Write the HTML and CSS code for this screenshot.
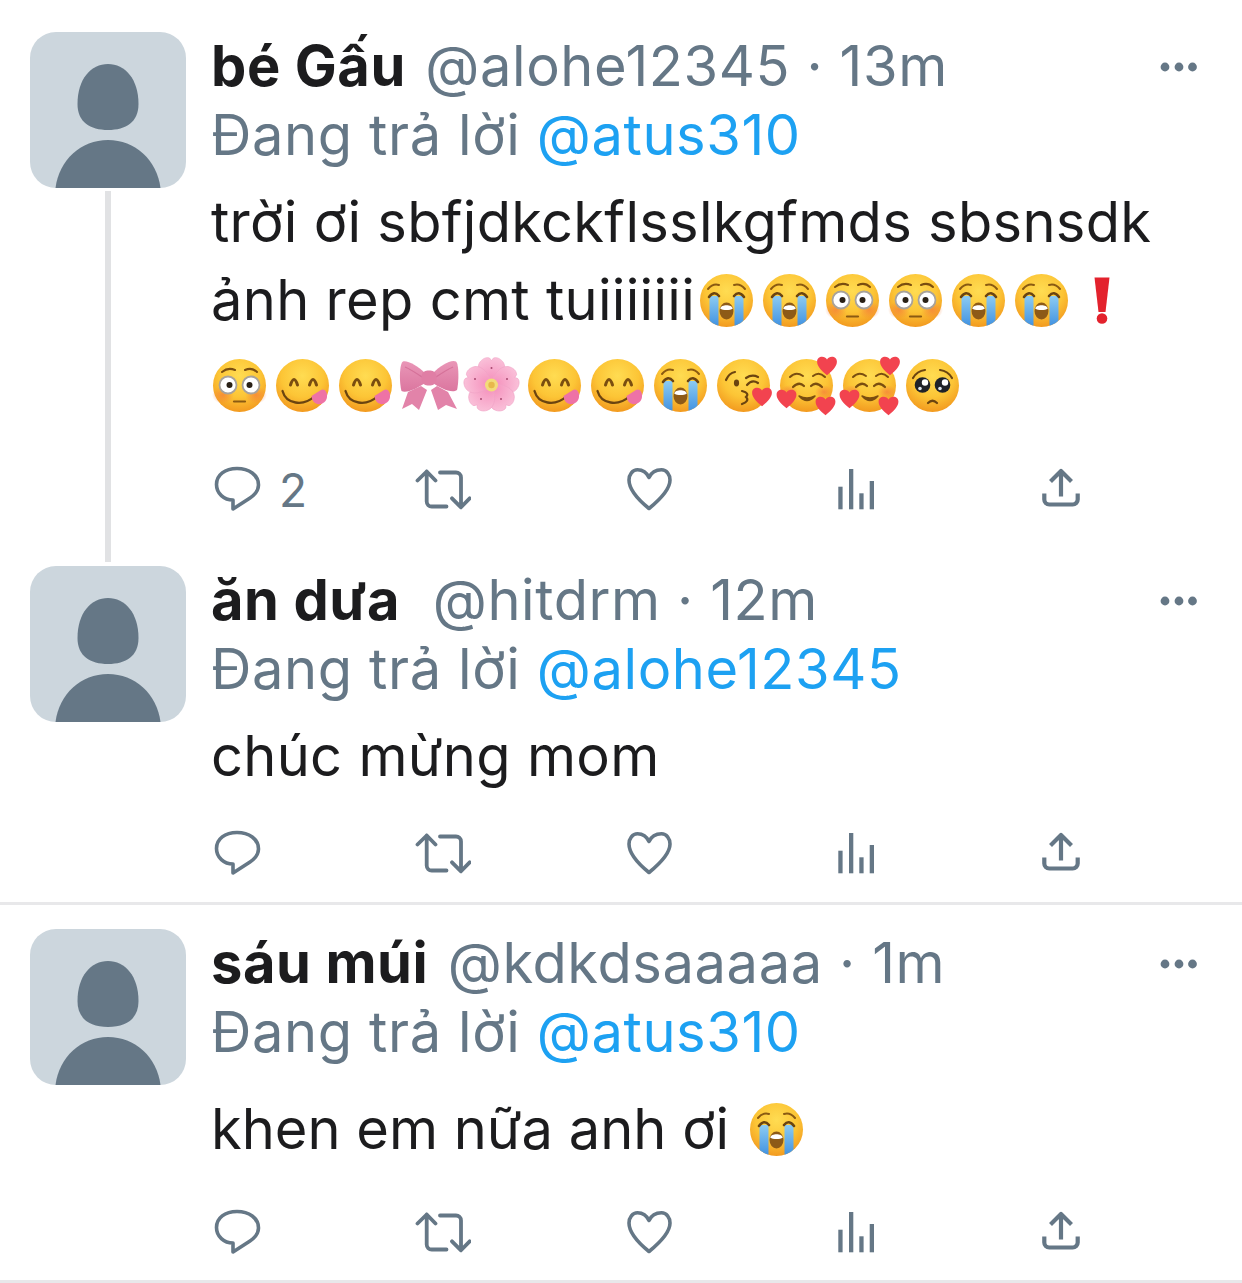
FILE: index.html
```html
<!DOCTYPE html>
<html lang="vi">
<head>
<meta charset="utf-8">
<title>Replies</title>
<link rel="stylesheet" href="styles.css">
</head>
<body>
<svg class="defs" viewBox="0 0 1 1" aria-hidden="true">
  <defs>
    <radialGradient id="face" cx="50%" cy="32%" r="72%">
      <stop offset="0" stop-color="#ffdc52"/><stop offset=".55" stop-color="#fcc536"/><stop offset="1" stop-color="#f1941c"/>
    </radialGradient>
    <radialGradient id="blush" cx="50%" cy="50%" r="50%">
      <stop offset="0" stop-color="#f5813a" stop-opacity=".75"/><stop offset="1" stop-color="#f5813a" stop-opacity="0"/>
    </radialGradient>
    <linearGradient id="tear" x1="0" y1="0" x2="0" y2="1">
      <stop offset="0" stop-color="#8ccbf2"/><stop offset="1" stop-color="#3d8fe0"/>
    </linearGradient>
    <linearGradient id="bowg" x1="0" y1="0" x2="0" y2="1">
      <stop offset="0" stop-color="#e996b7"/><stop offset="1" stop-color="#db769f"/>
    </linearGradient>
    <radialGradient id="petal" cx="50%" cy="85%" r="90%">
      <stop offset="0" stop-color="#f592bd"/><stop offset="1" stop-color="#fac2da"/>
    </radialGradient>
    <clipPath id="faceclip"><circle cx="31.5" cy="31.5" r="26.5"/></clipPath>
  </defs>

  <symbol id="ava" viewBox="0 0 156 156">
    <path d="M78 32C95 32 108.500 47 108.500 72C108.500 90 96 98 78 98C60 98 47.500 90 47.500 72C47.500 47 61 32 78 32Z"/>
    <path d="M25.500 156C29 128 51 108 78 108C105 108 127 128 130.500 156Z"/>
  </symbol>

  <symbol id="heartshape" viewBox="0 0 20 20">
    <path fill="#f2434f" d="M10 18.500C4 13.500 1 10 1 6C1 3 3 1.500 5.500 1.500C7.500 1.500 9 2.500 10 4C11 2.500 12.500 1.500 14.500 1.500C17 1.500 19 3 19 6C19 10 16 13.500 10 18.500Z"/>
  </symbol>

  <symbol id="cry" viewBox="0 0 63 63">
    <circle cx="31.500" cy="31.500" r="26.500" fill="url(#face)"/>
    <g clip-path="url(#faceclip)">
      <rect x="14.500" y="27" width="9" height="32" fill="url(#tear)"/>
      <rect x="39.500" y="27" width="9" height="32" fill="url(#tear)"/>
    </g>
    <path d="M13 20Q18 14 24 16M50 20Q45 14 39 16" fill="none" stroke="#8a5a12" stroke-width="2" stroke-linecap="round"/>
    <path d="M14 28Q19 21 24 27M39 27Q44 21 49 28" fill="none" stroke="#6b4410" stroke-width="2.600" stroke-linecap="round"/>
    <ellipse cx="31.500" cy="42" rx="7" ry="8.500" fill="#8d5a17"/>
    <path d="M25.200 39.500C26 35 37 35 37.800 39.500C35 41.500 28 41.500 25.200 39.500Z" fill="#fff"/>
  </symbol>

  <symbol id="flushed" viewBox="0 0 63 63">
    <circle cx="31.500" cy="31.500" r="26.500" fill="url(#face)"/>
    <ellipse cx="15" cy="41" rx="11" ry="9" fill="url(#blush)"/>
    <ellipse cx="48" cy="41" rx="11" ry="9" fill="url(#blush)"/>
    <path d="M14 18Q20 13 27 16M37 16Q44 13 49 18" fill="none" stroke="#7a4e10" stroke-width="2" stroke-linecap="round"/>
    <circle cx="20" cy="31" r="8.500" fill="#fff" stroke="#a8a29a" stroke-width="1.800"/>
    <circle cx="43" cy="31" r="8.500" fill="#fff" stroke="#a8a29a" stroke-width="1.800"/>
    <circle cx="21.500" cy="31" r="3" fill="#2a2116"/>
    <circle cx="41.500" cy="31" r="3" fill="#2a2116"/>
    <path d="M26 47.500H37" stroke="#8a5a12" stroke-width="2.200" stroke-linecap="round"/>
  </symbol>

  <symbol id="yum" viewBox="0 0 63 63">
    <circle cx="31.500" cy="31.500" r="26.500" fill="url(#face)"/>
    <path d="M19.500 31Q23 20 26.500 31M38.500 31Q42 20 45.500 31" fill="none" stroke="#7a4e10" stroke-width="3" stroke-linecap="round"/>
    <path d="M11.500 37C15 50 32 53 44 42" fill="none" stroke="#6b4410" stroke-width="2.300" stroke-linecap="round"/>
    <path d="M40.500 42L50 36C53.500 34 56.500 38 56 43C55.500 48 50.500 51 46.500 50C42.500 49 41 46 40.500 42Z" fill="#ee72a6"/>
  </symbol>

  <symbol id="kiss" viewBox="0 0 63 63">
    <circle cx="31.500" cy="31.500" r="26.500" fill="url(#face)"/>
    <path d="M14 26Q17 19 23 18" fill="none" stroke="#6b4410" stroke-width="2.200" stroke-linecap="round"/>
    <ellipse cx="24.500" cy="29" rx="2.600" ry="3.400" fill="#6b4410"/>
    <path d="M34 24Q40 20 46 23M35 31Q40 25 46 29" fill="none" stroke="#6b4410" stroke-width="2.200" stroke-linecap="round"/>
    <path d="M30 37Q38 39 34 43Q38 47 30 50" fill="none" stroke="#6b4410" stroke-width="2.200" stroke-linecap="round"/>
    <use href="#heartshape" x="39" y="32" width="22" height="22"/>
  </symbol>

  <symbol id="hearts" viewBox="0 0 63 63">
    <circle cx="31.500" cy="31.500" r="26.500" fill="url(#face)"/>
    <ellipse cx="14" cy="38" rx="9" ry="7" fill="url(#blush)"/>
    <ellipse cx="49" cy="38" rx="9" ry="7" fill="url(#blush)"/>
    <path d="M15 23Q21 17 28 22M38 22Q44 17 50 23" fill="none" stroke="#7a4e10" stroke-width="2" stroke-linecap="round"/>
    <path d="M18 33Q24 27 29 32M36 32Q41 27 47 33" fill="none" stroke="#7a4e10" stroke-width="2.200" stroke-linecap="round"/>
    <path d="M24 42Q32 51 40 42Q32 46 24 42Z" fill="#7a4e10" stroke="#7a4e10" stroke-width="1.500" stroke-linejoin="round"/>
    <use href="#heartshape" x="41" y="1" width="22" height="22"/>
    <use href="#heartshape" x="0.500" y="34" width="22" height="22"/>
    <use href="#heartshape" x="39.500" y="41" width="22" height="22"/>
  </symbol>

  <symbol id="plead" viewBox="0 0 63 63">
    <circle cx="31.500" cy="31.500" r="26.500" fill="url(#face)"/>
    <path d="M12 24Q16 17 24 16M51 24Q47 17 39 16" fill="none" stroke="#6b4410" stroke-width="2.200" stroke-linecap="round"/>
    <circle cx="21.500" cy="31" r="7.800" fill="#1f2229"/>
    <circle cx="41.500" cy="31" r="7.800" fill="#1f2229"/>
    <circle cx="24" cy="28.500" r="3.200" fill="#fff"/>
    <circle cx="44" cy="28.500" r="3.200" fill="#fff"/>
    <circle cx="19" cy="34.500" r="1.800" fill="#dfe6ee"/>
    <circle cx="39" cy="34.500" r="1.800" fill="#dfe6ee"/>
    <path d="M27 49Q31.500 44.500 36 49" fill="none" stroke="#6b4410" stroke-width="2.200" stroke-linecap="round"/>
  </symbol>

  <symbol id="bow" viewBox="0 0 63 63">
    <path d="M24 32L11 38L5 55L15 50L22 56L30 36Z" fill="#e283a9"/>
    <path d="M40 32L51 38L60 55L49 51L41 56L34 36Z" fill="#e283a9"/>
    <path d="M28 19C21 12 10 6 6 7.500C2.500 9 2 28 4.500 37C9 40 21 34 28 29Z" fill="url(#bowg)"/>
    <path d="M36 19C43 12 54 5 59 7.500C62 10 62 28 60 36C55 40 43 34 36 29Z" fill="url(#bowg)"/>
    <path d="M8 13C13 15 19 19 25 23M56 13C51 15 45 19 39 23" fill="none" stroke="#cf6690" stroke-width="1.200" opacity=".7"/>
    <rect x="24.500" y="16.500" width="15" height="15" rx="6" fill="#e07ea5"/>
  </symbol>

  <symbol id="flower" viewBox="0 0 63 63">
    <g fill="url(#petal)" stroke="#f0a3c5" stroke-width=".6">
      <path id="p1" d="M31.500 31C21 26 15 15 20 8C23 4 27 3 29.500 4L31.500 6.500L33.500 4C36 3 40 4 43 8C48 15 42 26 31.500 31Z"/>
      <use href="#p1" transform="rotate(72 31.500 31)"/>
      <use href="#p1" transform="rotate(144 31.500 31)"/>
      <use href="#p1" transform="rotate(216 31.500 31)"/>
      <use href="#p1" transform="rotate(288 31.500 31)"/>
    </g>
    <g fill="#a8486f">
      <circle cx="31.500" cy="14" r="1"/><circle cx="47" cy="25" r="1"/><circle cx="41" cy="45" r="1"/><circle cx="21" cy="45" r="1"/><circle cx="15" cy="25" r="1"/>
    </g>
    <circle cx="31.500" cy="31" r="6.500" fill="#f3dc7a"/>
    <circle cx="31.500" cy="31" r="3.200" fill="#e8b94c"/>
  </symbol>

  <symbol id="excl" viewBox="0 0 63 63">
    <path d="M21.500 8.500H36.500L32.500 43H25.500Z" fill="#e3222d"/>
    <circle cx="29" cy="49.500" r="5.300" fill="#e3222d"/>
  </symbol>

  <symbol id="i-reply" viewBox="0 0 56 50">
    <path d="M24 35V44L41 33C47 29 49.500 24.500 49.500 20C49.500 10 40 3.500 28 3.500C16 3.500 7.500 10 7.500 19.500C7.500 28.500 15 35 24 35Z"/>
  </symbol>
  <symbol id="i-rt" viewBox="0 0 56 50">
    <path d="M2.500 15.500L11.700 6.500L20.500 15.500M11.700 6.500V36.500A5 5 0 0 0 16.700 41.500H31.500"/>
    <path d="M25 7.500H41A5 5 0 0 1 46 12.500V42M37 33.300L46 42.300L54.700 33.300"/>
  </symbol>
  <symbol id="i-like" viewBox="0 0 56 50">
    <path d="M28 12.500C25.500 7 21 4.700 16.500 4.700C11.500 4.700 8 9.500 8 15C8 26 20 37 28 43.500C36 37 49 26 49 15C49 9.500 45.500 4.700 40.500 4.700C35 4.700 30.500 7 28 12.500Z"/>
  </symbol>
  <symbol id="i-stats" viewBox="0 0 56 50">
    <rect x="11.300" y="21.700" width="4.300" height="22.600"/>
    <rect x="22" y="4" width="4.300" height="40.300"/>
    <rect x="32.300" y="28.300" width="4.300" height="16"/>
    <rect x="42.700" y="16" width="4.300" height="28.300"/>
  </symbol>
  <symbol id="i-share" viewBox="0 0 56 50">
    <path d="M17.500 16.500L28 6L38.500 16.500M28 6V31.500M11.300 28.500V34.500A5 5 0 0 0 16.300 39.500H39.700A5 5 0 0 0 44.700 34.500V28.500"/>
  </symbol>
</svg>

<main class="timeline">
  <article class="tweet tweet-threaded">
    <div class="side">
      <svg class="avatar"><use href="#ava"/></svg>
      <div class="thread-line"></div>
    </div>
    <div class="content">
      <div class="meta">
        <span class="name">bé Gấu</span> <span class="handle handle-gap">@alohe12345 · 13m</span>
        <svg class="more" viewBox="0 0 38 10"><circle cx="5" cy="5" r="4.400"/><circle cx="19" cy="5" r="4.400"/><circle cx="32.500" cy="5" r="4.400"/></svg>
      </div>
      <div class="reply-to">Đang trả lời <a class="mention">@atus310</a></div>
      <div class="text">trời ơi sbfjdkckflsslkgfmds sbsnsdk</div>
      <div class="text">ảnh rep cmt tuiiiiiii<svg class="emoji"><use href="#cry"/></svg><svg class="emoji"><use href="#cry"/></svg><svg class="emoji"><use href="#flushed"/></svg><svg class="emoji"><use href="#flushed"/></svg><svg class="emoji"><use href="#cry"/></svg><svg class="emoji"><use href="#cry"/></svg><svg class="emoji"><use href="#excl"/></svg></div>
      <div class="emoji-line"><svg class="emoji"><use href="#flushed"/></svg><svg class="emoji"><use href="#yum"/></svg><svg class="emoji"><use href="#yum"/></svg><svg class="emoji"><use href="#bow"/></svg><svg class="emoji"><use href="#flower"/></svg><svg class="emoji"><use href="#yum"/></svg><svg class="emoji"><use href="#yum"/></svg><svg class="emoji"><use href="#cry"/></svg><svg class="emoji"><use href="#kiss"/></svg><svg class="emoji"><use href="#hearts"/></svg><svg class="emoji"><use href="#hearts"/></svg><svg class="emoji"><use href="#plead"/></svg></div>
      <div class="actions">
        <div class="action"><svg class="ico line"><use href="#i-reply"/></svg><span class="count">2</span></div>
        <div class="action"><svg class="ico line round"><use href="#i-rt"/></svg></div>
        <div class="action"><svg class="ico line"><use href="#i-like"/></svg></div>
        <div class="action"><svg class="ico solid"><use href="#i-stats"/></svg></div>
        <div class="action"><svg class="ico line thick"><use href="#i-share"/></svg></div>
      </div>
    </div>
  </article>

  <article class="tweet tweet-ruled">
    <div class="side"><svg class="avatar"><use href="#ava"/></svg></div>
    <div class="content">
      <div class="meta">
        <span class="name">ăn dưa</span>&nbsp; <span class="handle">@hitdrm · 12m</span>
        <svg class="more" viewBox="0 0 38 10"><circle cx="5" cy="5" r="4.400"/><circle cx="19" cy="5" r="4.400"/><circle cx="32.500" cy="5" r="4.400"/></svg>
      </div>
      <div class="reply-to">Đang trả lời <a class="mention">@alohe12345</a></div>
      <div class="text">chúc mừng mom</div>
      <div class="actions">
        <div class="action"><svg class="ico line"><use href="#i-reply"/></svg></div>
        <div class="action"><svg class="ico line round"><use href="#i-rt"/></svg></div>
        <div class="action"><svg class="ico line"><use href="#i-like"/></svg></div>
        <div class="action"><svg class="ico solid"><use href="#i-stats"/></svg></div>
        <div class="action"><svg class="ico line thick"><use href="#i-share"/></svg></div>
      </div>
    </div>
  </article>

  <article class="tweet tweet-ruled tweet-spaced">
    <div class="side"><svg class="avatar"><use href="#ava"/></svg></div>
    <div class="content">
      <div class="meta">
        <span class="name">sáu múi</span> <span class="handle handle-gap">@kdkdsaaaaa · 1m</span>
        <svg class="more" viewBox="0 0 38 10"><circle cx="5" cy="5" r="4.400"/><circle cx="19" cy="5" r="4.400"/><circle cx="32.500" cy="5" r="4.400"/></svg>
      </div>
      <div class="reply-to">Đang trả lời <a class="mention">@atus310</a></div>
      <div class="text text-with-emoji">khen em nữa anh ơi <svg class="emoji"><use href="#cry"/></svg></div>
      <div class="actions">
        <div class="action"><svg class="ico line"><use href="#i-reply"/></svg></div>
        <div class="action"><svg class="ico line round"><use href="#i-rt"/></svg></div>
        <div class="action"><svg class="ico line"><use href="#i-like"/></svg></div>
        <div class="action"><svg class="ico solid"><use href="#i-stats"/></svg></div>
        <div class="action"><svg class="ico line thick"><use href="#i-share"/></svg></div>
      </div>
    </div>
  </article>
</main>
</body>
</html>
```

FILE: styles.css
```css
* { box-sizing: border-box; }

html, body {
  margin: 0;
  background: #fff;
}

body {
  font-family: Inter, "Liberation Sans", sans-serif;
  font-size: 56px;
  color: #1c1c1e;
  overflow: hidden;
}

.defs {
  display: block;
  width: 0;
  height: 0;
}

.timeline {
  padding-top: 32px;
}

.tweet {
  display: flex;
  gap: 25px;
  padding-left: 30px;
}

.tweet-threaded {
  height: 534px;
}

.tweet-ruled {
  height: 339px;
  border-bottom: 3px solid #e8e8ea;
}

.tweet-spaced {
  height: 378px;
  padding-top: 24px;
}

.side {
  display: flex;
  flex-direction: column;
  align-items: center;
  width: 156px;
  flex: none;
}

.avatar {
  display: block;
  width: 156px;
  height: 156px;
  flex: none;
  border-radius: 26px;
  background: #ccd6dd;
  fill: #657786;
}

.thread-line {
  flex: 1;
  width: 6px;
  margin: 3px 0 4px;
  background: #e1e2e4;
}

.content {
  flex: 1;
  min-width: 0;
  padding-right: 44px;
}

.meta {
  position: relative;
  height: 69px;
  line-height: 69px;
  letter-spacing: .6px;
  white-space: nowrap;
}

.name {
  font-weight: 700;
}

.handle {
  color: #657786;
}

.handle-gap {
  margin-left: 3px;
}

.more {
  position: absolute;
  right: 0;
  top: 30px;
  width: 38px;
  height: 10px;
  fill: #657786;
}

.reply-to {
  height: 69px;
  line-height: 69px;
  letter-spacing: .6px;
  color: #657786;
  white-space: nowrap;
}

.mention {
  color: #1da1f2;
}

.text {
  display: flex;
  align-items: center;
  height: 78px;
  letter-spacing: .3px;
  white-space: pre;
}

.reply-to + .text {
  margin-top: 13px;
}

.emoji {
  display: block;
  flex: none;
  width: 63px;
  height: 63px;
}

.emoji-line {
  display: flex;
  align-items: center;
  height: 78px;
  margin: 7px 0 8px -3.500px;
}

.reply-to + .text-with-emoji {
  margin-top: 23px;
  letter-spacing: 0;
}

.actions {
  display: flex;
  margin: 34px 0 0 -2px;
}

.emoji-line + .actions {
  margin-top: 41px;
}

.text-with-emoji + .actions {
  margin-top: 40px;
}

.action {
  display: flex;
  align-items: center;
  width: 206px;
  height: 50px;
  flex: none;
}

.ico {
  display: block;
  width: 56px;
  height: 50px;
  flex: none;
}

.line {
  fill: none;
  stroke: #657786;
  stroke-width: 3.600;
  stroke-linejoin: round;
}

.round {
  stroke-linecap: round;
  stroke-width: 3.800;
}

.thick {
  stroke-width: 4.200;
}

.solid {
  fill: #657786;
}

.count {
  margin-left: 14px;
  font-size: 46px;
  color: #657786;
}
```
